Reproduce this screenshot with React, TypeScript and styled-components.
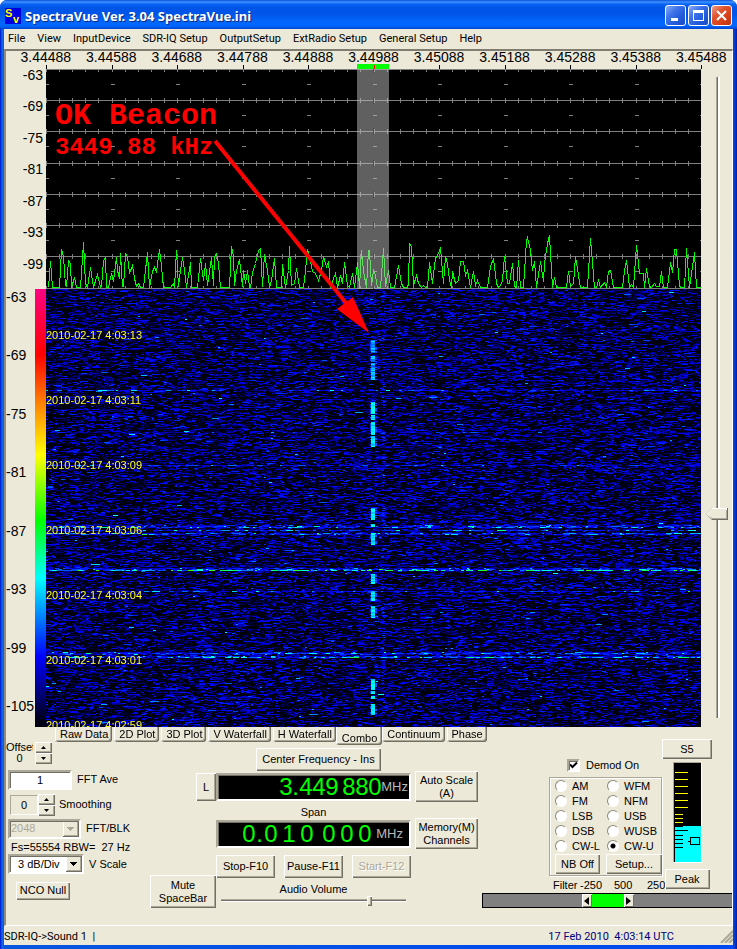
import React, { useLayoutEffect, useRef } from "react";
import styled, { createGlobalStyle, css } from "styled-components";

const FACE = "#ece9d8";
const LIGHT = "#ffffff";
const SHADOW = "#aca899";
const DARK = "#716f64";
const SANS = '"Liberation Sans", Arial, sans-serif';
const CAPTION = '"Noto Sans", "Trebuchet MS", sans-serif';
const MENU = 'Roboto, Tahoma, sans-serif';

const GlobalStyle = createGlobalStyle`
  * { box-sizing: border-box; }
  body { margin: 0; background: #fff; }
  button, input, select, fieldset { font: inherit; color: inherit; margin: 0; }
`;

const raised = css`
  background: ${FACE};
  border: 0;
  box-shadow: inset 1px 1px 0 ${LIGHT}, inset -1px -1px 0 ${DARK}, inset -2px -2px 0 ${SHADOW};
`;

const sunken = css`
  border: 2px solid;
  border-color: ${SHADOW} ${LIGHT} ${LIGHT} ${SHADOW};
  box-shadow: inset 1px 1px 0 ${DARK};
`;

/* ---------- window frame ---------- */

const Window = styled.main`
  display: flex;
  flex-direction: column;
  min-height: 100vh;
  padding: 0 4px 4px;
  background: linear-gradient(90deg, #0019cf 0, #0831d9 1px, #166aee 2px, #0855dd 4px, #0048f1 calc(100% - 4px), #0042e0 calc(100% - 3px), #001ea0 100%);
  border-radius: 7px 7px 0 0;
  border-bottom: 1px solid #00138c;
  overflow: hidden;
  font: 11px/13px ${SANS};
  color: #000;
`;

const TitleBar = styled.header`
  display: flex;
  align-items: center;
  gap: 4px;
  height: 29px;
  margin: 0 -4px;
  padding: 2px 5px 0;
  background: linear-gradient(#0a4fd8 0, #3d93ff 2px, #0a64f4 4px, #0054e6 8px, #0055e9 14px, #0366fc 22px, #0267ff 26px, #0143cf 29px);
`;

const Title = styled.h1`
  flex: 1;
  margin: 0;
  font: bold 13px/18px ${CAPTION};
  color: #fff;
  text-shadow: 1px 1px 0 #0a2a80;
`;

const CaptionButtons = styled.div`
  display: flex;
  gap: 2px;
`;

const CaptionButton = styled.button<{ $danger?: boolean }>`
  display: grid;
  place-items: center;
  width: 21px;
  height: 21px;
  padding: 0;
  border: 1px solid #fff;
  border-radius: 3px;
  background: ${(p) =>
    p.$danger
      ? "linear-gradient(135deg, #f0a08a 0, #e0552f 35%, #d8431c 65%, #b8340f 100%)"
      : "linear-gradient(135deg, #88aef5 0, #3f74ea 35%, #245ddb 65%, #1b4bc4 100%)"};
`;

const MenuBar = styled.nav`
  display: flex;
  flex-wrap: wrap;
  gap: 12px;
  min-height: 20px;
  padding: 0 4px;
  background: ${FACE};
`;

const MenuItem = styled.button`
  padding: 0;
  border: 0;
  background: none;
  font: 11px/18px ${MENU};
`;

const Panel = styled.section`
  flex: 1;
  background: ${FACE};
  border-style: solid;
  border-width: 2px 1px 1px 2px;
  border-color: #807d70 ${LIGHT} ${LIGHT} #8f8c7e;
`;

const StatusBar = styled.footer`
  display: flex;
  align-items: center;
  justify-content: space-between;
  height: 19px;
  padding: 2px 0 0;
  background: ${FACE};
  font: 11px/16px ${MENU};
  white-space: pre;
`;

const Clock = styled.time`
  margin-left: auto;
  margin-right: 46px;
  color: #000080;
`;

/* ---------- displays ---------- */

const FrequencyScale = styled.div`
  display: grid;
  grid-template-columns: repeat(11, 1fr);
  margin: 0 -2px 0 7px;
  font-size: 14px;
  line-height: 13px;
  text-align: center;
`;

const ScaleMarks = styled.svg`
  display: block;
  width: calc(100% - 71px);
  height: 5px;
  margin-left: 40px;
`;

const Displays = styled.div`
  display: grid;
  grid-template-columns: 40px 1fr 31px;
`;

const Axes = styled.div`
  font-size: 14px;
`;

const SpectrumAxis = styled.div`
  display: grid;
  grid-template-rows: repeat(7, 1fr);
  height: 220px;
  padding-right: 3px;
  line-height: 12px;
  text-align: right;
`;

const WaterfallAxis = styled.div`
  display: flex;
  justify-content: space-between;
  height: 438px;
`;

const WaterfallLabels = styled.div`
  display: flex;
  flex-direction: column;
  justify-content: space-between;
  padding-bottom: 13px;
  line-height: 16px;
`;

const ColourBar = styled.div`
  width: 11px;
  background: linear-gradient(#ff0084 0, #ff0000 15%, #ff8000 26%, #ffff00 38%, #00ff00 53%, #00ffff 66%, #0000ff 84%, #000010 99%);
`;

const Plot = styled.div`
  position: relative;
  background: #000;
  overflow: hidden;
`;

const Spectrum = styled.svg`
  display: block;
  width: 100%;
  height: 220px;
`;

const WaterfallCanvas = styled.canvas`
  display: block;
  width: 100%;
  height: 438px;
  image-rendering: pixelated;
`;

const TimeStamps = styled.div`
  position: absolute;
  top: 220px;
  left: 0;
  height: 438px;
  display: grid;
  grid-auto-rows: 65px;
  padding-top: 40px;
  color: #ffff20;
  overflow: hidden;
`;

const Note = styled.div`
  position: absolute;
  top: 31px;
  left: 9px;
  color: #ff0000;
  font-family: "Liberation Mono", "Courier New", monospace;
  font-weight: bold;
  white-space: pre;
`;

const NoteTitle = styled.div`
  font-size: 30px;
  line-height: 32px;
`;

const NoteDetail = styled.div`
  font-size: 24px;
  line-height: 32px;
`;

const Arrow = styled.svg`
  position: absolute;
  top: 0;
  left: 0;
  width: 100%;
  height: 100%;
`;

const thumbVertical = `url("data:image/svg+xml,%3Csvg xmlns='http://www.w3.org/2000/svg' width='22' height='12'%3E%3Cpath d='M0 6L6 0H22V12H6Z' fill='%23716f64'/%3E%3Cpath d='M0 6L6 0H21V11H6Z' fill='%23fff'/%3E%3Cpath d='M2 6L6 2H21V11H6Z' fill='%23aca899'/%3E%3Cpath d='M1 6L6 1H20V10H6Z' fill='%23ece9d8'/%3E%3C/svg%3E")`;

const LevelSlider = styled.input`
  appearance: none;
  writing-mode: vertical-lr;
  width: 22px;
  height: 641px;
  margin: 8px 0 0 5px;
  background: linear-gradient(90deg, transparent 10px, ${SHADOW} 10px, ${SHADOW} 11px, ${DARK} 11px, ${DARK} 12px, #fff 12px, #fff 14px, transparent 14px);
  &::-webkit-slider-thumb {
    appearance: none;
    width: 22px;
    height: 12px;
    background: ${thumbVertical};
  }
`;

/* ---------- controls ---------- */

const Tabs = styled.div`
  display: flex;
  align-items: flex-start;
  gap: 2px;
  height: 12px;
  padding-left: 49px;
`;

const Tab = styled.button<{ $active?: boolean }>`
  flex: none;
  position: relative;
  height: ${(p) => (p.$active ? 18 : 15)}px;
  padding: ${(p) => (p.$active ? "4px 5px 0 6px" : "0 4px 0 5px")};
  margin: ${(p) => (p.$active ? "0 -2px" : "0")};
  line-height: 13px;
  white-space: nowrap;
  border: 0;
  border-radius: 0 0 3px 2px;
  background: ${FACE};
  box-shadow: inset 1px 0 0 ${LIGHT}, inset -1px -1px 0 ${DARK}, inset -2px -2px 0 ${SHADOW};
`;

const Controls = styled.div`
  display: grid;
  grid-template-columns: 144px minmax(328px, 1fr) 252px;
  min-height: 186px;
`;

const Column = styled.div<{ $top?: number; $align?: string }>`
  display: flex;
  flex-direction: column;
  align-items: ${(p) => p.$align ?? "flex-start"};
  padding-top: ${(p) => p.$top ?? 0}px;
`;

const Field = styled.div<{ $height: number; $indent?: number; $gap?: number }>`
  display: flex;
  align-items: center;
  gap: ${(p) => p.$gap ?? 5}px;
  height: ${(p) => p.$height}px;
  padding-left: ${(p) => p.$indent ?? 2}px;
`;

const OffsetText = styled.div`
  width: 27px;
  overflow: hidden;
  line-height: 11px;
  text-align: center;
  white-space: nowrap;
`;

const OffsetLabel = styled.span`
  display: flex;
  justify-content: flex-start;
`;

const Spinner = styled.div`
  display: flex;
  flex-direction: column;
  width: 17px;
`;

const SpinButton = styled.button`
  ${raised}
  display: grid;
  place-items: center;
  height: 11px;
  padding: 0;
`;

const TextField = styled.input<{ $width: number; $muted?: boolean }>`
  ${sunken}
  width: ${(p) => p.$width}px;
  height: 20px;
  padding: 0;
  text-align: center;
  background: ${(p) => (p.$muted ? FACE : "#fff")};
  ${(p) => p.$muted && css`border-width: 1px; box-shadow: none;`}
`;

const dropArrow = (fill: string) =>
  `url("data:image/svg+xml,%3Csvg xmlns='http://www.w3.org/2000/svg' width='16' height='16' shape-rendering='crispEdges'%3E%3Cpath d='M0 0H16V16H0Z' fill='%23716f64'/%3E%3Cpath d='M0 0H15V15H0Z' fill='%23fff'/%3E%3Cpath d='M1 1H15V15H1Z' fill='%23aca899'/%3E%3Cpath d='M1 1H14V14H1Z' fill='%23ece9d8'/%3E%3Cpath d='M4 6H11L7.500 10Z' fill='%23${fill}'/%3E%3C/svg%3E")`;

const Select = styled.select<{ $width: number; $indent: number }>`
  ${sunken}
  appearance: none;
  width: ${(p) => p.$width}px;
  height: 20px;
  padding: 0 16px 0 ${(p) => p.$indent}px;
  border-radius: 0;
  background: #fff ${dropArrow("000")} right center no-repeat;
  &:disabled {
    opacity: 1;
    color: ${SHADOW};
    background: ${FACE} ${dropArrow("aca899")} right center no-repeat;
  }
`;

const PushButton = styled.button<{ $width: number; $height: number }>`
  ${raised}
  flex: none;
  width: ${(p) => p.$width}px;
  height: ${(p) => p.$height}px;
  padding: 0;
  line-height: 13px;
  white-space: pre-line;
  &:disabled {
    color: ${SHADOW};
    text-shadow: 1px 1px 0 #fff;
  }
`;

const Tuning = styled.div`
  display: grid;
  grid-template-columns: 66px 195px 67px;
`;

const Readout = styled.output`
  ${sunken}
  display: flex;
  align-items: center;
  justify-content: flex-end;
  width: 195px;
  height: 28px;
  background: #000;
  color: #00ff00;
  font-size: 24px;
  line-height: 24px;
`;

const Digit = styled.span<{ $width: number }>`
  width: ${(p) => p.$width}px;
`;

const Unit = styled.span<{ $right: number }>`
  margin-right: ${(p) => p.$right}px;
  color: #b8b8b8;
  font-size: 13px;
`;

const Caption = styled.label`
  align-self: center;
`;

const SpanCaption = styled.span`
  align-self: center;
  margin-top: 3px;
`;

const Transport = styled.div`
  display: flex;
  justify-content: space-between;
  width: 195px;
  margin-top: 6px;
`;

const VolumeSlider = styled.input`
  appearance: none;
  width: 185px;
  height: 10px;
  background: linear-gradient(transparent 3px, ${SHADOW} 3px, ${SHADOW} 4px, ${DARK} 4px, ${DARK} 5px, #fff 5px, #fff 6px, transparent 6px);
  &::-webkit-slider-thumb {
    ${raised}
    appearance: none;
    width: 5px;
    height: 10px;
  }
`;

const Volume = styled.div`
  display: flex;
  flex-direction: column;
  padding: 5px 0 0 5px;
`;

const Receiver = styled.div`
  display: grid;
  grid-template-columns: 113px 50px;
  padding-left: 69px;
`;

const Check = styled.label`
  display: flex;
  align-items: center;
  gap: 6px;
  height: 13px;
  padding-left: 18px;
`;

const CheckBox = styled.input`
  ${sunken}
  appearance: none;
  width: 13px;
  height: 13px;
  background: #fff;
  &:checked {
    background: #fff url("data:image/svg+xml,%3Csvg xmlns='http://www.w3.org/2000/svg' width='9' height='9'%3E%3Cpath d='M1 3.500L3.500 6L8 1.500' fill='none' stroke='%23000' stroke-width='2'/%3E%3C/svg%3E") center no-repeat;
  }
`;

const ModeBox = styled.fieldset`
  display: grid;
  grid-template-columns: 52px 1fr;
  grid-template-rows: repeat(5, 14px);
  row-gap: 1px;
  width: 113px;
  min-width: 0;
  height: 99px;
  margin-top: 5px;
  padding: 1px 0 0 5px;
  border: 1px solid ${SHADOW};
  box-shadow: inset 1px 1px 0 #fff, 1px 1px 0 #fff;
`;

const ModeLabel = styled.label`
  display: flex;
  align-items: center;
  gap: 5px;
  line-height: 14px;
`;

const Radio = styled.input`
  appearance: none;
  width: 12px;
  height: 12px;
  border: 1px solid;
  border-color: #8c897c #fff #fff #8c897c;
  border-radius: 50%;
  background: #fff;
  &:checked {
    background: radial-gradient(circle, #000 0, #000 2px, #fff 3px);
  }
`;

const ModeButtons = styled.div`
  grid-column: 1 / 3;
  display: flex;
  gap: 6px;
`;

const FilterRow = styled.div`
  display: grid;
  grid-template-columns: 27px 34px 33px 19px;
  margin-top: 3px;
  padding-left: 4px;
  line-height: 12px;
`;

const Meter = styled.svg`
  display: block;
  margin: 3px 0 6px;
`;

const FilterBar = styled.div`
  display: flex;
  justify-content: center;
  height: 15px;
  margin: 2px 0 0 2px;
  border: 1px solid #000;
  border-right: 0;
  background: #808080;
`;

const Passband = styled.div`
  width: 32px;
  background: #00ff00;
`;

const FilterStep = styled.button`
  display: grid;
  place-items: center;
  width: 10px;
  padding: 0;
  border: 0;
  background: ${FACE};
  box-shadow: inset 1px 1px 0 #fff, inset -1px -1px 0 ${DARK};
`;

/* ---------- data ---------- */

const MENUS = ["File", "View", "InputDevice", "SDR-IQ Setup", "OutputSetup", "ExtRadio Setup", "General Setup", "Help"];
const FREQUENCIES = ["3.44488", "3.44588", "3.44688", "3.44788", "3.44888", "3.44988", "3.45088", "3.45188", "3.45288", "3.45388", "3.45488"];
const SPECTRUM_LEVELS = [-63, -69, -75, -81, -87, -93, -99];
const WATERFALL_LEVELS = [-63, -69, -75, -81, -87, -93, -99, -105];
const STAMPS = ["4:03:13", "4:03:11", "4:03:09", "4:03:06", "4:03:04", "4:03:01", "4:02:59"];
const TABS = ["Raw Data", "2D Plot", "3D Plot", "V Waterfall", "H Waterfall", "Combo", "Continuum", "Phase"];
const MODES = ["AM", "WFM", "FM", "NFM", "LSB", "USB", "DSB", "WUSB", "CW-L", "CW-U"];

/* Trace samples: three samples per plot unit, y grows downwards to the floor at 203. */
const TRACE = [
  { start: -138, points: "143,203 149,125 155,203 177,203 184,88 189,110 194,195 197,200 203,122 209,130 214,203 223,172 229,203 241,203 250,67 256,190 262,203 271,142 279,203 292,163 299,203 302,200 308,120 314,112 319,203 324,203 333,160 339,185 347,112 352,150 356,175 361,99 366,200 370,200 376,100 381,110 388,160 397,135 403,175 409,200 415,190 420,203 430,203 442,97 448,203 456,155 463,143 468,155 478,88 484,140 490,203 511,203 520,190 523,203 527,90 533,200 540,150 547,112 553,150 559,203 569,127 574,203 590,203 601,115 608,180 615,130 622,195 633,112 639,195 643,110 649,100 655,130 660,203 686,203 692,80 698,110 702,195 707,150 718,118 725,200 729,150 735,190 740,152 748,203" },
  { start: 612, points: "0,203 6,158 14,130 25,90 31,86 37,200 43,103 50,150 56,203 64,180 71,115 78,203 92,203 97,133 104,203 113,150 118,80 124,195 131,190 139,145 147,203 160,203 166,150 170,88 178,110 185,155 195,160 203,180 212,150 220,108 228,140 235,125 241,203 248,175 255,160 262,203 271,165 277,190 283,127 292,195 297,203 305,160 312,203 320,127 326,203 334,90 340,155 347,203 353,92 358,92 363,195 368,150 376,165 382,203 390,203 400,85 406,200 414,150 420,203 433,203 444,137 453,190 460,203 470,203 474,190 478,70 484,80 490,195 497,165 503,190 512,203 518,195 525,203 531,203 538,127 545,190 550,160 556,115 565,100 571,82 578,190 585,108 590,130 598,180 603,203 607,155 614,190 625,180 630,125 640,125 645,165 652,150 660,203 670,155 676,195 681,180 690,203 712,203 720,140 730,115 738,190 745,203" },
  { start: 1323, points: "40,195 45,180 52,110 60,190 66,190 75,130 80,200 87,203 94,122 100,203 109,203 116,60 121,52 128,90 135,150 142,125 148,203 158,125 168,185 172,130 180,70 185,47 190,100 194,203 200,172 208,203 236,203 242,155 248,200 257,190 263,110 272,165 280,203 300,203 310,55 320,203 328,203 334,180 340,203 350,188 357,203 362,155 370,150 377,203 405,203 412,150 418,120 427,203 433,193 438,203 446,77 451,100 456,160 467,160 471,203 476,145 486,200 493,203 502,190 508,200 516,200 523,155 529,203 540,203 548,128 554,158 562,87 568,87 575,195 580,203 590,203 598,85 605,203 612,160 620,97 627,203 641,203" },
];

const tracePath = TRACE.flatMap(({ start, points }) =>
  points.split(" ").map((pair) => {
    const [x, y] = pair.split(",").map(Number);
    return `${Math.round((x + start) / 3) + 0.5},${Math.floor(y / 3) + 151.5}`;
  })
).join(" ");

const ROWS = [0, 31, 62, 94, 125, 156, 187, 219];

function gridPath() {
  let d = "";
  ROWS.forEach((y, row) => {
    d += `M0 ${y + 0.5}H655`;
    for (let i = 0; i <= 50; i++) {
      const x = Math.round(i * 13.1) + 0.5;
      d += `M${x} ${y - 2}V${y + 3}`;
      if (i % 5 === 0 && row < 7) d += `M${x - 2} ${y + 15.5}H${x + 2}`;
    }
  });
  return d;
}

const redTicks = ROWS.map((y) => `M327.500 ${y - 3}V${y + 4}`).join("");

/* ---------- waterfall ---------- */

/* Interference lines, [row, strength]; keyed carrier, [first row, last row]. */
const BURSTS: [number, number][] = [[101, 0.38], [143, 0.2], [176, 0.3], [236, 0.25], [237, 0.42], [238, 0.5], [241, 0.45], [244, 0.5], [245, 0.35], [279, 0.3], [280, 0.5], [281, 0.9], [302, 0.34], [363, 0.3], [364, 0.48], [365, 0.3], [367, 0.35], [368, 0.65]];
const KEYED: [number, number][] = [[51, 63], [67, 72], [74, 90], [113, 124], [126, 130], [133, 145], [147, 157], [219, 230], [235, 237], [244, 255], [285, 294], [302, 311], [317, 328], [390, 400], [402, 404], [407, 409], [415, 425]];

const STOPS = [[0, 0, 4], [0, 0, 150], [0, 0, 255], [0, 90, 255], [0, 255, 255], [0, 255, 120], [60, 255, 0]];

function colour(level: number) {
  const v = Math.min(0.999, Math.max(0, level)) * (STOPS.length - 1);
  const i = Math.floor(v);
  return STOPS[i].map((c, k) => c + (STOPS[i + 1][k] - c) * (v - i));
}

function drawWaterfall(canvas: HTMLCanvasElement) {
  const ctx = canvas.getContext("2d");
  if (!ctx) return;
  const { width, height } = canvas;
  const image = ctx.createImageData(width, height);
  let seed = 20100217;
  const random = () => {
    seed = (seed * 1664525 + 1013904223) >>> 0;
    return seed / 4294967296;
  };
  const bursts = new Map(BURSTS);
  for (let y = 0; y < height; y++) {
    const burst = bursts.get(y) ?? 0;
    let x = 0;
    while (x < width) {
      const run = 2 + Math.floor(random() * random() * 8);
      let level = Math.pow(random(), 3.2) * 0.4;
      if (random() < 0.03) level += random() * 0.3;
      if (burst && random() < 0.75) level += burst * (0.35 + random() * 0.65);
      const rgb = colour(level);
      for (let i = x; i < Math.min(width, x + run); i++) {
        image.data.set([rgb[0], rgb[1], rgb[2], 255], (y * width + i) * 4);
      }
      x += run;
    }
  }
  const paint = (x: number, y: number, w: number, level: number) => {
    const rgb = colour(level);
    for (let i = x; i < x + w; i++) image.data.set([rgb[0], rgb[1], rgb[2], 255], (y * width + i) * 4);
  };
  KEYED.forEach(([from, to], index) => {
    const gain = index < 3 ? 0.5 : 0.58;
    for (let y = from; y <= to; y++) {
      paint(325, y, 4, gain + random() * 0.15);
      if (random() < 0.5) paint(324, y, 1, 0.45);
      if (random() < 0.4) paint(329, y, 2, 0.48);
    }
  });
  for (let y = 0; y < height; y++) {
    if (random() < 0.25) paint(335 + Math.floor(random() * 3), y, 3, 0.2 + random() * 0.25);
  }
  ctx.putImageData(image, 0, 0);
}

function Waterfall() {
  const ref = useRef<HTMLCanvasElement>(null);
  useLayoutEffect(() => {
    if (ref.current) drawWaterfall(ref.current);
  }, []);
  return <WaterfallCanvas ref={ref} width={655} height={438} role="img" aria-label="Waterfall" />;
}

/* ---------- parts ---------- */

function Logo() {
  return (
    <svg width="16" height="16" viewBox="0 0 16 16" aria-hidden="true">
      <rect width="16" height="16" fill="#0000e0" />
      <g fill="#ffff00" fontFamily="Liberation Sans" fontWeight="bold" fontSize="11">
        <text x="0" y="9">S</text>
        <text x="8" y="15">v</text>
      </g>
    </svg>
  );
}

function Spin({ name }: { name: string }) {
  return (
    <Spinner>
      <SpinButton aria-label={`${name} up`}>
        <svg width="5" height="3"><path d="M0 3L2.500 0L5 3Z" /></svg>
      </SpinButton>
      <SpinButton aria-label={`${name} down`}>
        <svg width="5" height="3"><path d="M0 0L2.500 3L5 0Z" /></svg>
      </SpinButton>
    </Spinner>
  );
}

function Frequency({ groups, cell, point, unitRight }: { groups: string[]; cell: number; point: number; unitRight: number }) {
  const widthOf = (group: string, i: number) => {
    if (group[i] === ".") return point;
    return group[i + 1] === "." ? Math.min(cell, 14) : cell;
  };
  return (
    <Readout>
      {groups.map((group, g) => (
        <React.Fragment key={g}>
          {g > 0 && <Digit $width={4} />}
          {[...group].map((ch, i) => (
            <Digit key={i} $width={widthOf(group, i)}>{ch}</Digit>
          ))}
        </React.Fragment>
      ))}
      <Unit $right={unitRight}>MHz</Unit>
    </Readout>
  );
}

function SMeter() {
  return (
    <Meter width="29" height="101" shapeRendering="crispEdges" role="img" aria-label="Signal strength">
      <rect width="29" height="101" fill="#fff" />
      <path d="M0 0H28V1H1V100H0Z" fill={SHADOW} />
      <rect x="1" y="1" width="27" height="99" fill="#000" />
      <rect x="2" y="64" width="26" height="36" fill="#00ffff" />
      <path d="M2 10.500h13M2 17.500h13M2 24.500h13M2 31.500h13M2 38.500h13M2 45.500h13M2 52.500h8M2 56.500h8M2 60.500h8" stroke="#ffff00" />
      <path d="M2 64.500h8M2 68.500h13M2 73.500h8M2 77.500h8M2 81.500h8M2 85.500h8M15 79h2" stroke="#000" />
      <rect x="17.500" y="75.500" width="9" height="7" fill="none" stroke="#000" />
    </Meter>
  );
}

export default function App() {
  return (
    <>
      <GlobalStyle />
      <Window>
        <TitleBar>
          <Logo />
          <Title>SpectraVue Ver. 3.04 SpectraVue.ini</Title>
          <CaptionButtons>
            <CaptionButton aria-label="Minimize">
              <svg width="13" height="13"><path d="M2 9H9V12H2Z" fill="#fff" /></svg>
            </CaptionButton>
            <CaptionButton aria-label="Maximize">
              <svg width="13" height="13"><path d="M1 1H12V12H1ZM2 4V11H11V4Z" fill="#fff" fillRule="evenodd" /></svg>
            </CaptionButton>
            <CaptionButton aria-label="Close" $danger>
              <svg width="13" height="13"><path d="M2 2L11 11M11 2L2 11" stroke="#fff" strokeWidth="2" /></svg>
            </CaptionButton>
          </CaptionButtons>
        </TitleBar>
        <MenuBar>
          {MENUS.map((m) => <MenuItem key={m}>{m}</MenuItem>)}
        </MenuBar>
        <Panel>
          <FrequencyScale>
            {FREQUENCIES.map((f) => <span key={f}>{f}</span>)}
          </FrequencyScale>
          <ScaleMarks viewBox="0 0 655 5" preserveAspectRatio="none" shapeRendering="crispEdges" overflow="visible">
            <rect x="311" width="32" height="5" fill="#00ff00" />
            {FREQUENCIES.map((f, i) => (
              <rect key={f} x={Math.round(i * 65.5)} y="1" width="1" height="4" fill={i === 5 ? "#ff0000" : "#000"} />
            ))}
          </ScaleMarks>
          <Displays>
            <Axes>
              <SpectrumAxis>
                {SPECTRUM_LEVELS.map((l) => <span key={l}>{l}</span>)}
              </SpectrumAxis>
              <WaterfallAxis>
                <WaterfallLabels>
                  {WATERFALL_LEVELS.map((l) => <span key={l}>{l}</span>)}
                </WaterfallLabels>
                <ColourBar />
              </WaterfallAxis>
            </Axes>
            <Plot>
              <Spectrum viewBox="0 0 655 220" preserveAspectRatio="none" shapeRendering="crispEdges" role="img" aria-label="Spectrum">
                <path d={gridPath()} stroke="#808080" fill="none" />
                <polyline points={tracePath} stroke="#00ff00" fill="none" />
                <rect x="311" width="32" height="220" fill="#c0c0c0" fillOpacity="0.5" />
                <path d={redTicks} stroke="#ff0000" />
              </Spectrum>
              <Waterfall />
              <TimeStamps>
                {STAMPS.map((s) => <span key={s}>2010-02-17 {s}</span>)}
              </TimeStamps>
              <Note>
                <NoteTitle>OK Beacon</NoteTitle>
                <NoteDetail>3449.88 kHz</NoteDetail>
              </Note>
              <Arrow viewBox="0 0 655 658" preserveAspectRatio="none" aria-hidden="true">
                <path d="M169 72L300 234" stroke="#ff0000" strokeWidth="4" />
                <path d="M307 228L291 240L323 264Z" fill="#ff0000" />
              </Arrow>
            </Plot>
            <LevelSlider type="range" min="0" max="200" defaultValue="137" aria-label="Level" />
          </Displays>
          <Tabs role="tablist">
            {TABS.map((t) => (
              <Tab key={t} role="tab" aria-selected={t === "Combo"} $active={t === "Combo"}>{t}</Tab>
            ))}
          </Tabs>
          <Controls>
            <Column $top={3}>
              <Field $height={22} $indent={0} $gap={2}>
                <OffsetText><OffsetLabel>Offset</OffsetLabel>0</OffsetText>
                <Spin name="Offset" />
              </Field>
              <Field $height={31}>
                <TextField id="ave" $width={64} defaultValue="1" />
                <label htmlFor="ave">FFT Ave</label>
              </Field>
              <Field $height={19} $indent={4} $gap={4}>
                <Field $height={20} $indent={0} $gap={0}>
                  <TextField id="smooth" $width={28} $muted readOnly value="0" />
                  <Spin name="Smoothing" />
                </Field>
                <label htmlFor="smooth">Smoothing</label>
              </Field>
              <Field $height={29}>
                <Select id="blk" $width={73} $indent={1} disabled><option>2048</option></Select>
                <label htmlFor="blk">FFT/BLK</label>
              </Field>
              <Field $height={8} $indent={5}>
                <span>Fs=55554 RBW=&nbsp; 27 Hz</span>
              </Field>
              <Field $height={26}>
                <Select id="vscale" $width={76} $indent={8}><option>3 dB/Div</option></Select>
                <label htmlFor="vscale">V Scale</label>
              </Field>
              <Field $height={27} $indent={10}>
                <PushButton $width={54} $height={18}>NCO Null</PushButton>
              </Field>
            </Column>

            <Tuning>
              <Column $top={34} $align="flex-end">
                <PushButton $width={20} $height={28}>L</PushButton>
                <Column $top={74} $align="stretch">
                  <PushButton $width={66} $height={33}>{"Mute\nSpaceBar"}</PushButton>
                </Column>
              </Column>
              <Column $top={9}>
                <Field $height={23} $indent={40}>
                  <PushButton $width={125} $height={23}>Center Frequency - Ins</PushButton>
                </Field>
                <Field $height={32} $indent={0}>
                  <Frequency groups={["3.449", "880"]} cell={13} point={7} unitRight={1} />
                </Field>
                <SpanCaption>Span</SpanCaption>
                <Field $height={30} $indent={0}>
                  <Frequency groups={["0.010", "000"]} cell={18} point={8} unitRight={6} />
                </Field>
                <Transport>
                  <PushButton $width={59} $height={23}>Stop-F10</PushButton>
                  <PushButton $width={59} $height={23}>Pause-F11</PushButton>
                  <PushButton $width={59} $height={23} disabled>Start-F12</PushButton>
                </Transport>
                <Volume>
                  <Caption htmlFor="volume">Audio Volume</Caption>
                  <VolumeSlider id="volume" type="range" min="0" max="100" defaultValue="81" />
                </Volume>
              </Column>
              <Column $top={32} $align="flex-end">
                <PushButton $width={63} $height={31}>{"Auto Scale\n(A)"}</PushButton>
                <Column $top={16}>
                  <PushButton $width={63} $height={31}>{"Memory(M)\nChannels"}</PushButton>
                </Column>
              </Column>
            </Tuning>

            <div>
              <Receiver>
                <Column $top={20}>
                  <Check><CheckBox type="checkbox" defaultChecked />Demod On</Check>
                  <ModeBox aria-label="Demodulation mode">
                    {MODES.map((m) => (
                      <ModeLabel key={m}>
                        <Radio type="radio" name="mode" defaultChecked={m === "CW-U"} />
                        {m}
                      </ModeLabel>
                    ))}
                    <ModeButtons>
                      <PushButton $width={45} $height={20}>NB Off</PushButton>
                      <PushButton $width={56} $height={20}>Setup...</PushButton>
                    </ModeButtons>
                  </ModeBox>
                  <FilterRow>
                    <span>Filter</span><span>-250</span><span>500</span><span>250</span>
                  </FilterRow>
                </Column>
                <Column $align="center">
                  <PushButton $width={50} $height={20}>S5</PushButton>
                  <SMeter />
                  <PushButton $width={45} $height={20}>Peak</PushButton>
                </Column>
              </Receiver>
              <FilterBar>
                <FilterStep aria-label="Lower filter edge"><svg width="5" height="8"><path d="M5 0V8L0 4Z" /></svg></FilterStep>
                <Passband />
                <FilterStep aria-label="Upper filter edge"><svg width="5" height="8"><path d="M0 0V8L5 4Z" /></svg></FilterStep>
              </FilterBar>
            </div>
          </Controls>
        </Panel>
        <StatusBar>
          <span>{"SDR-IQ->Sound 1  |"}</span>
          <Clock>{"17 Feb 2010  4:03:14 UTC"}</Clock>
          <svg width="13" height="13" aria-hidden="true">
            <path d="M1 13L13 1M5 13L13 5M9 13L13 9" stroke={SHADOW} strokeWidth="2" />
          </svg>
        </StatusBar>
      </Window>
    </>
  );
}
